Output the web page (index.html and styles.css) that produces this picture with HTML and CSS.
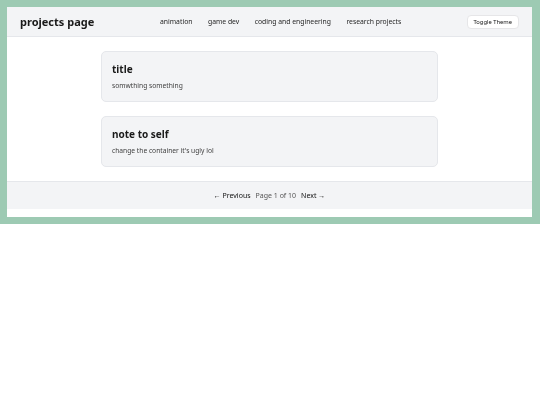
FILE: index.html
```html
<!DOCTYPE html>
<html>
<head>
<meta charset="utf-8">
<link rel="stylesheet" href="styles.css">
</head>
<body>
<div class="frame">
  <header class="topbar">
    <div class="brand">projects page</div>
    <nav class="nav">
      <a href="#">animation</a>
      <a href="#">game dev</a>
      <a href="#">coding and engineering</a>
      <a href="#">research projects</a>
    </nav>
    <button class="toggle">Toggle Theme</button>
  </header>
  <main class="content">
    <article class="card">
      <h2 class="card-title">title</h2>
      <p class="card-text">somwthing something</p>
    </article>
    <article class="card">
      <h2 class="card-title">note to self</h2>
      <p class="card-text">change the container it's ugly lol</p>
    </article>
  </main>
  <footer class="pager">
    <a href="#">← Previous</a>
    <span class="page-info">Page 1 of 10</span>
    <a href="#">Next →</a>
  </footer>
  <div class="spacer"></div>
</div>
</body>
</html>
```
FILE: styles.css
```css
html, body {
  margin: 0;
  padding: 0;
  background: #ffffff;
}
body {
  font-family: "Noto Sans", "Open Sans", sans-serif;
  color: #1a1a1a;
  -webkit-font-smoothing: antialiased;
}
.frame {
  width: 540px;
  box-sizing: border-box;
  border: 7px solid #9dcab3;
  border-right-width: 8px;
  background: #ffffff;
  will-change: transform;
}
.topbar {
  height: 30px;
  box-sizing: border-box;
  background: #f3f4f6;
  border-bottom: 1px solid #e5e7eb;
  display: flex;
  align-items: center;
  padding: 0 13px 0 13px;
}
.brand {
  font-weight: 700;
  font-size: 11px;
  color: #1a1a1a;
  width: 140px;
}
.nav {
  display: flex;
  gap: 15.5px;
  flex: 1;
}
.nav a {
  font-size: 6.8px;
  color: #1f1f1f;
  text-decoration: none;
}
.toggle {
  font-family: "Noto Sans", sans-serif;
  font-size: 5.8px;
  color: #111111;
  background: #ffffff;
  border: 1px solid #e6e6e8;
  border-radius: 4px;
  height: 14px;
  padding: 0 6px;
}
.content {
  display: flex;
  flex-direction: column;
  align-items: center;
  gap: 14px;
  padding: 14px 0;
}
.card {
  width: 337px;
  height: 51px;
  box-sizing: border-box;
  background: #f3f4f6;
  border: 1px solid #e5e7eb;
  border-radius: 5px;
  padding: 10px 10px;
}
.card-title {
  margin: 0 0 5px 0;
  font-size: 10px;
  font-weight: 700;
  color: #1a1a1a;
  line-height: 14px;
}
.card-text {
  margin: 0;
  font-size: 6.7px;
  color: #3f3f3f;
  line-height: 9px;
}
.pager {
  height: 28px;
  box-sizing: border-box;
  background: #f3f4f6;
  border-top: 1px solid #e5e7eb;
  display: flex;
  align-items: center;
  justify-content: center;
  gap: 5px;
  font-size: 7px;
}
.pager a {
  color: #111111;
  text-decoration: none;
}
.page-info {
  color: #555555;
}
.spacer {
  height: 8px;
}
```
